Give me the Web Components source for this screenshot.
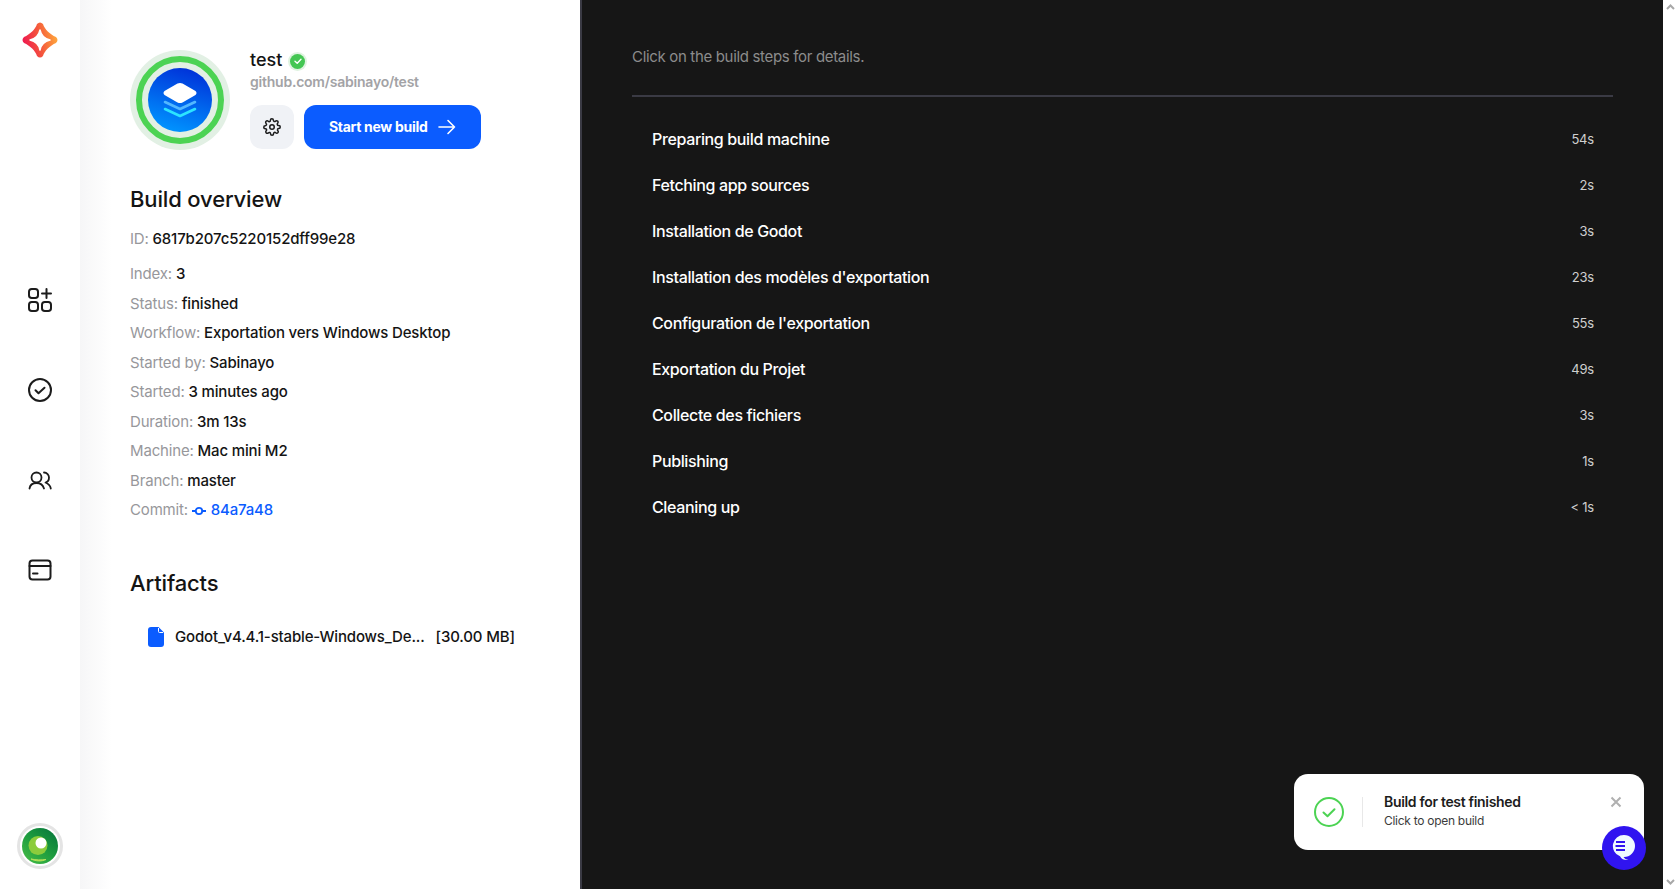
<!DOCTYPE html>
<html>
<head>
<meta charset="utf-8">
<title>Build</title>
<style>
  html, body { margin: 0; height: 100%; overflow: hidden; background: #fff; }
  body { font-family: "Inter", "Liberation Sans", sans-serif; color: #141414; }
</style>
</head>
<body>
<build-page>
  <nav-rail slot="rail"></nav-rail>
  <build-panel slot="panel">
    <info-row slot="overview" name="ID" class="first">6817b207c5220152dff99e28</info-row>
    <info-row slot="overview" name="Index">3</info-row>
    <info-row slot="overview" name="Status">finished</info-row>
    <info-row slot="overview" name="Workflow">Exportation vers Windows Desktop</info-row>
    <info-row slot="overview" name="Started by">Sabinayo</info-row>
    <info-row slot="overview" name="Started">3 minutes ago</info-row>
    <info-row slot="overview" name="Duration">3m 13s</info-row>
    <info-row slot="overview" name="Machine">Mac mini M2</info-row>
    <info-row slot="overview" name="Branch">master</info-row>
    <info-row slot="overview" name="Commit" commit>84a7a48</info-row>
  </build-panel>
  <log-panel slot="log">
    <step-row time="54s">Preparing build machine</step-row>
    <step-row time="2s">Fetching app sources</step-row>
    <step-row time="3s">Installation de Godot</step-row>
    <step-row time="23s">Installation des modèles d'exportation</step-row>
    <step-row time="55s">Configuration de l'exportation</step-row>
    <step-row time="49s">Exportation du Projet</step-row>
    <step-row time="3s">Collecte des fichiers</step-row>
    <step-row time="1s">Publishing</step-row>
    <step-row time="&lt; 1s">Cleaning up</step-row>
  </log-panel>
  <fake-scrollbar slot="scroll"></fake-scrollbar>
  <toast-card slot="overlay"></toast-card>
  <chat-button slot="overlay"></chat-button>
</build-page>

<script>
(function () {
  function define(name, html, extra) {
    const template = document.createElement("template");
    template.innerHTML = html;
    class El extends HTMLElement {
      constructor() {
        super();
        this.attachShadow({ mode: "open" });
        this.shadowRoot.appendChild(template.content.cloneNode(true));
      }
      connectedCallback() {
        if (extra) extra(this, this.shadowRoot);
      }
    }
    window.customElements.define(name, El);
  }

  define("build-page", `
    <style>
      :host { display: flex; height: 889px; width: 1678px; position: relative; overflow: hidden; }
      ::slotted(toast-card) { position: absolute; left: 1294px; top: 774px; }
      ::slotted(chat-button) { position: absolute; left: 1602px; top: 826px; }
    </style>
    <slot name="rail"></slot>
    <slot name="panel"></slot>
    <slot name="log"></slot>
    <slot name="scroll"></slot>
    <slot name="overlay"></slot>
  `);

  define("nav-rail", `
    <style>
      :host { display: flex; flex-direction: column; align-items: center; width: 80px; flex: none; background: #fff; box-sizing: border-box; padding-top: 22px; }
      svg { display: block; }
      .logo { margin-bottom: 227px; overflow: visible; }
      .links { display: flex; flex-direction: column; gap: 60px; }
      .links svg { fill: none; stroke: #1c1c1c; stroke-width: 2; stroke-linecap: round; stroke-linejoin: round; }
      .me { margin-top: auto; margin-bottom: 20px; width: 46px; height: 46px; border-radius: 50%; background: #fff; border: 3px solid #e4e4e4; box-sizing: border-box; display: flex; align-items: center; justify-content: center; }
    </style>
    <svg class="logo" width="36" height="36" viewBox="0 0 36 36">
      <defs>
        <linearGradient id="lg" x1="0" y1="0.6" x2="1" y2="0.4">
          <stop offset="0" stop-color="#ee1750"/>
          <stop offset="0.5" stop-color="#f4583c"/>
          <stop offset="1" stop-color="#ffaa3c"/>
        </linearGradient>
      </defs>
      <path d="M15 2Q18 -1 21 2C22.500 7 28 12.500 34 15Q37 18 34 21C28 23.500 22.500 29 21 34Q18 37 15 34C13.500 29 8 23.500 2 21Q-1 18 2 15C8 12.500 13.500 7 15 2Z" fill="url(#lg)"/>
      <path d="M18 8C19 13 23 17 28 18C23 19 19 23 18 28C17 23 13 19 8 18C13 17 17 13 18 8Z" fill="#fff" stroke="#fff" stroke-width="1.500" stroke-linejoin="round"/>
    </svg>
    <div class="links">
      <svg width="30" height="30" viewBox="0 0 30 30">
        <rect x="4" y="4" width="9" height="9" rx="2.800"/>
        <rect x="4" y="17" width="9" height="9" rx="2.800"/>
        <rect x="17" y="17" width="9" height="9" rx="2.800"/>
        <path d="M21.500 4v9M17 8.500h9"/>
      </svg>
      <svg width="30" height="30" viewBox="0 0 30 30">
        <circle cx="15" cy="15" r="11"/>
        <path d="M10.500 15.200l3 3 6-5.500"/>
      </svg>
      <svg width="30" height="30" viewBox="0 0 30 30" style="stroke-width:1.800">
        <circle cx="11.500" cy="12.500" r="5"/>
        <path d="M4.500 23.500C5 20 7.500 18 11.500 18C15.500 18 18 20 19 23.500"/>
        <path d="M19 7.500C22 7.500 24 10 24 12.500C24 15 22.500 17 20.500 17.500C23 18.500 25.200 20 25.800 23.500"/>
      </svg>
      <svg width="30" height="30" viewBox="0 0 30 30">
        <rect x="4.500" y="5.500" width="21" height="19" rx="3"/>
        <path d="M4.500 11h21M8 18.500h4.500"/>
      </svg>
    </div>
    <div class="me">
      <svg width="36" height="36" viewBox="0 0 36 36">
        <defs>
          <linearGradient id="me" x1="0.85" y1="0.1" x2="0.2" y2="0.9">
            <stop offset="0" stop-color="#0a7d3c"/>
            <stop offset="0.55" stop-color="#1f9e3f"/>
            <stop offset="1" stop-color="#3db544"/>
          </linearGradient>
        </defs>
        <circle cx="18" cy="18" r="18" fill="url(#me)"/>
        <circle cx="16" cy="17.500" r="9.500" fill="#8ccc3c"/>
        <circle cx="19" cy="15" r="5.500" fill="#fff"/>
        <path d="M9 31c5 2.500 11 2.500 15 .5-5 .7-10 .5-15-.5z" fill="#b4e05a" stroke="#b4e05a"/>
      </svg>
    </div>
  `);

  define("build-avatar", `
    <style>
      :host { display: block; width: 100px; height: 100px; flex: none; }
      svg { display: block; }
    </style>
    <svg width="100" height="100" viewBox="0 0 100 100">
      <defs>
        <linearGradient id="bg2" x1="0.7" y1="0" x2="0.4" y2="1">
          <stop offset="0" stop-color="#0030d8"/>
          <stop offset="1" stop-color="#0094ff"/>
        </linearGradient>
      </defs>
      <circle cx="50" cy="50" r="50" fill="#e2f0e4"/>
      <circle cx="50" cy="50" r="41" fill="none" stroke="#4cd353" stroke-width="6"/>
      <circle cx="50" cy="50" r="32" fill="url(#bg2)"/>
      <path d="M35 52l15 7 15-7" fill="none" stroke="#52b8ff" stroke-width="2.600" stroke-linejoin="round" stroke-linecap="round"/>
      <path d="M35 59l15 7 15-7" fill="none" stroke="#2ce4ff" stroke-width="2.600" stroke-linejoin="round" stroke-linecap="round"/>
      <path d="M47.500 33.500Q50 32.300 52.500 33.500L65.500 41Q67.500 43 65.500 45L52.500 52.500Q50 53.700 47.500 52.500L34.500 45Q32.500 43 34.500 41Z" fill="#fff"/>
    </svg>
  `);

  define("build-panel", `
    <style>
      :host { display: block; width: 500px; flex: none; box-sizing: border-box; padding: 50px 40px 0 50px; background: linear-gradient(90deg, #f6f6f7 0, #fff 32px); }
      .head { display: flex; gap: 20px; }
      .meta { min-width: 0; }
      .title { display: flex; align-items: center; gap: 6px; font-size: 18px; line-height: 22px; font-weight: 500; height: 20px; }
      .badge { width: 19px; height: 19px; margin-top: 2px; border-radius: 50%; background: #dff3e0; display: flex; align-items: center; justify-content: center; }
      .badge i { width: 15px; height: 15px; border-radius: 50%; background: #44c653; display: flex; align-items: center; justify-content: center; }
      .repo { font-size: 14px; line-height: 18px; font-weight: 600; color: #a3a3a6; margin-top: 3px; letter-spacing: -0.23px; }
      .actions { display: flex; gap: 10px; margin-top: 14px; }
      .gear { width: 44px; height: 44px; border-radius: 12px; background: #f0f2f6; display: flex; align-items: center; justify-content: center; }
      .start { width: 177px; height: 44px; box-sizing: border-box; padding: 0 0 1px 25px; border-radius: 12px; background: #0b5cff; color: #fff; font-size: 14px; font-weight: 700; display: flex; align-items: center; gap: 11px; letter-spacing: -0.3px; }
      h2 { font-size: 22px; line-height: 28px; font-weight: 500; margin: 0; color: #141414; letter-spacing: -0.15px; }
      .overview { margin-top: 35px; }
      .rows { margin-top: 11px; display: flex; flex-direction: column; }
      .artifacts { margin-top: 44px; }
      .file { display: flex; align-items: center; margin: 29px 0 0 18px; font-size: 15px; line-height: 22px; font-weight: 500; white-space: nowrap; letter-spacing: -0.16px; }
      .file svg { margin-right: 11px; display: block; }
      .file span + span { margin-left: 11px; }
    </style>
    <div class="head">
      <build-avatar></build-avatar>
      <div class="meta">
        <div class="title">test
          <span class="badge"><i><svg width="10" height="10" viewBox="0 0 10 10"><path d="M2 5.200l2.200 2L8 3.200" fill="none" stroke="#fff" stroke-width="1.400" stroke-linecap="round" stroke-linejoin="round"/></svg></i></span>
        </div>
        <div class="repo">github.com/sabinayo/test</div>
        <div class="actions">
          <div class="gear">
            <svg width="18" height="18" viewBox="0 0 24 24" fill="none" stroke="#1c1c1c" stroke-width="2" stroke-linecap="round" stroke-linejoin="round">
              <circle cx="12" cy="12" r="3"/>
              <path d="M19.400 15a1.650 1.650 0 0 0 .33 1.820l.06.06a2 2 0 1 1-2.830 2.830l-.06-.06a1.650 1.650 0 0 0-2.820 1.170V21a2 2 0 1 1-4 0v-.09a1.650 1.650 0 0 0-2.900-1.080l-.06.06a2 2 0 1 1-2.830-2.830l.06-.06a1.650 1.650 0 0 0-1.170-2.820H3a2 2 0 1 1 0-4h.09a1.650 1.650 0 0 0 1.080-2.900l-.06-.06a2 2 0 1 1 2.830-2.830l.06.06a1.650 1.650 0 0 0 2.820-1.170V3a2 2 0 1 1 4 0v.09a1.650 1.650 0 0 0 2.820 1.170l.06-.06a2 2 0 1 1 2.830 2.830l-.06.06a1.650 1.650 0 0 0 1.170 2.820H21a2 2 0 1 1 0 4h-.09a1.650 1.650 0 0 0-1.510 1.090z"/>
            </svg>
          </div>
          <div class="start">Start new build
            <svg width="18" height="16" viewBox="0 0 18 16" fill="none" stroke="#fff" stroke-width="1.600" stroke-linecap="round" stroke-linejoin="round"><path d="M1 8h15.500M10 1.500L16.500 8 10 14.500"/></svg>
          </div>
        </div>
      </div>
    </div>
    <div class="overview">
      <h2>Build overview</h2>
      <div class="rows"><slot name="overview"></slot></div>
    </div>
    <div class="artifacts">
      <h2>Artifacts</h2>
      <div class="file">
        <svg width="16" height="20" viewBox="0 0 16 20"><path d="M3 0h7.500L16 5.500V17a3 3 0 0 1-3 3H3a3 3 0 0 1-3-3V3a3 3 0 0 1 3-3z" fill="#0b5cff"/><path d="M10.500 1v3.500a1 1 0 0 0 1 1H15" fill="none" stroke="#fff" stroke-width="1"/></svg>
        <span>Godot_v4.4.1-stable-Windows_De...</span><span>[30.00 MB]</span>
      </div>
    </div>
  `);

  define("info-row", `
    <style>
      :host { display: block; font-size: 15px; line-height: 29.500px; font-weight: 500; white-space: nowrap; color: #141414; letter-spacing: -0.16px; }
      :host(.first) { margin-bottom: 5.500px; }
      .k { color: #97979b; font-weight: 400; }
      .c { display: none; vertical-align: -1px; margin-right: 1px; }
      :host([commit]) { color: #0b5cff; }
      :host([commit]) .c { display: inline-block; }
    </style>
    <span class="k"></span>
    <svg class="c" width="14" height="10" viewBox="0 0 14 10" fill="none" stroke="#0b5cff" stroke-width="1.800"><circle cx="7" cy="5" r="3.200"/><path d="M0 5h3.800M10.200 5H14"/></svg>
    <slot></slot>
  `, (el, root) => {
    root.querySelector(".k").textContent = el.getAttribute("name") + ":";
  });

  define("log-panel", `
    <style>
      :host { display: block; flex: 1; min-width: 0; box-sizing: border-box; background: #161616; border-left: 2px solid #3a3a44; padding: 46px 50px 0 50px; }
      .hint { color: #8c8c8c; font-size: 15px; line-height: 22px; letter-spacing: -0.33px; }
      hr { border: 0; height: 2px; background: #3a3a44; margin: 27px 0 19px; }
      .steps { display: flex; flex-direction: column; padding: 0 19px 0 20px; }
    </style>
    <div class="hint">Click on the build steps for details.</div>
    <hr>
    <div class="steps"><slot></slot></div>
  `);

  define("step-row", `
    <style>
      :host { display: flex; justify-content: space-between; align-items: center; height: 46px; color: #fff; font-size: 16px; font-weight: 500; white-space: nowrap; letter-spacing: -0.36px; }
      .t { font-size: 13px; color: #cfcfcf; font-weight: 400; letter-spacing: -0.2px; }
    </style>
    <span><slot></slot></span>
    <span class="t"></span>
  `, (el, root) => {
    root.querySelector(".t").textContent = el.getAttribute("time");
  });

  define("fake-scrollbar", `
    <style>
      :host { display: flex; flex-direction: column; justify-content: space-between; align-items: center; width: 15px; flex: none; background: #fff; padding: 4px 0; box-sizing: border-box; }
      svg { display: block; }
    </style>
    <svg width="9" height="6" viewBox="0 0 9 6"><path d="M1 5l3.500-3.500L8 5" fill="none" stroke="#a8a8a8" stroke-width="2"/></svg>
    <svg width="9" height="6" viewBox="0 0 9 6"><path d="M1 1l3.500 3.500L8 1" fill="none" stroke="#a8a8a8" stroke-width="2"/></svg>
  `);

  define("toast-card", `
    <style>
      :host { display: flex; align-items: center; width: 350px; height: 76px; box-sizing: border-box; background: #fff; border-radius: 14px; padding: 0 20px; position: relative; }
      svg { display: block; flex: none; }
      .sep { width: 1px; height: 30px; background: #e8e8e8; margin: 0 21px 0 18px; }
      .txt { margin-top: -2px; }
      .a { font-size: 14px; line-height: 18px; font-weight: 600; color: #1c1c1c; letter-spacing: -0.32px; }
      .b { font-size: 12px; line-height: 18px; color: #3c3c3c; margin-top: 1px; letter-spacing: -0.28px; }
      .x { position: absolute; right: 22px; top: 22px; }
    </style>
    <svg width="30" height="30" viewBox="0 0 30 30" fill="none" stroke="#4cd353" stroke-width="2" stroke-linecap="round" stroke-linejoin="round"><circle cx="15" cy="15" r="14"/><path d="M9.500 15.500l4 3.800 7-7"/></svg>
    <div class="sep"></div>
    <div class="txt">
      <div class="a">Build for test finished</div>
      <div class="b">Click to open build</div>
    </div>
    <svg class="x" width="12" height="12" viewBox="0 0 12 12"><path d="M1.500 1.500l9 9M10.500 1.500l-9 9" stroke="#b0b0b0" stroke-width="2"/></svg>
  `);

  define("chat-button", `
    <style>
      :host { display: flex; align-items: center; justify-content: center; width: 44px; height: 44px; border-radius: 50%; background: #3014f0; }
      svg { display: block; }
    </style>
    <svg width="24" height="28" viewBox="0 0 24 28">
      <path d="M12 1a11 11 0 1 1 0 22h-.5c1 1.500 2.500 2.500 5 3-3.500.5-7-.5-8.500-3.700A11 11 0 0 1 12 1z" fill="#f0fbff"/>
      <path d="M4 8h9M3.500 12h9.500M4 16h9" stroke="#3014f0" stroke-width="2"/>
    </svg>
  `);
})();
</script>
</body>
</html>
